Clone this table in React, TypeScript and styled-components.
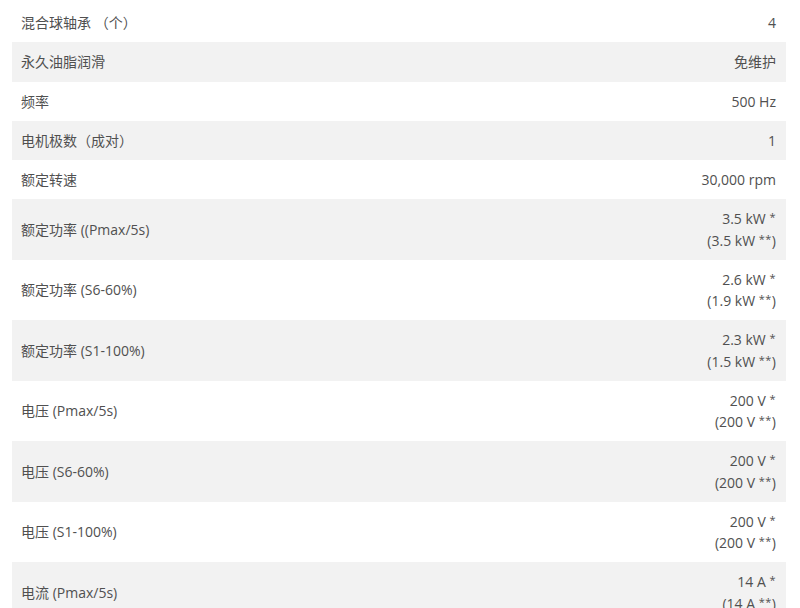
import * as React from "react"
import styled, { createGlobalStyle } from "styled-components"

const GlobalStyle = createGlobalStyle`
    html, body {
        margin: 0;
        padding: 0;
        background: #ffffff;
    }
    body {
        font-family: "Open Sans", "Noto Sans CJK SC", sans-serif;
        font-size: 14px;
        color: #505050;
    }
`

const Wrapper = styled.div`
    padding: 3px 14px 0 12px;
`

const SpecTable = styled.table`
    width: 100%;
    border-collapse: collapse;
    border-spacing: 0;
`

const Row = styled.tr`
    &:nth-child(even) {
        background: #f2f2f2;
    }
`

const Label = styled.td`
    padding: 9px 9px;
    line-height: 21.25px;
    vertical-align: middle;
    text-align: left;
    white-space: nowrap;
`

const Value = styled.td`
    padding: 9px 10px;
    line-height: 21.25px;
    vertical-align: middle;
    text-align: right;
    white-space: nowrap;
`

const Line = styled.div`
    display: block;
`

const Star = styled.span`
    font-size: 11px;
    line-height: 0;
    vertical-align: 3px;
    letter-spacing: 0.5px;
`

type Spec = { label: string; value?: string; power?: [string, string] }

const specs: Spec[] = [
    { label: "混合球轴承 （个）", value: "4" },
    { label: "永久油脂润滑", value: "免维护" },
    { label: "频率", value: "500 Hz" },
    { label: "电机极数（成对）", value: "1" },
    { label: "额定转速", value: "30,000 rpm" },
    { label: "额定功率 ((Pmax/5s)", power: ["3.5 kW", "3.5 kW"] },
    { label: "额定功率 (S6-60%)", power: ["2.6 kW", "1.9 kW"] },
    { label: "额定功率 (S1-100%)", power: ["2.3 kW", "1.5 kW"] },
    { label: "电压 (Pmax/5s)", power: ["200 V", "200 V"] },
    { label: "电压 (S6-60%)", power: ["200 V", "200 V"] },
    { label: "电压 (S1-100%)", power: ["200 V", "200 V"] },
    { label: "电流 (Pmax/5s)", power: ["14 A", "14 A"] },
]

export default function App() {
    return (
        <>
            <GlobalStyle />
            <Wrapper>
                <SpecTable>
                    <tbody>
                        {specs.map((s) => (
                            <Row key={s.label}>
                                <Label>{s.label}</Label>
                                <Value>
                                    {s.power ? (
                                        <>
                                            <Line>
                                                {s.power[0]} <Star>*</Star>
                                            </Line>
                                            <Line>
                                                ({s.power[1]} <Star>**</Star>)
                                            </Line>
                                        </>
                                    ) : (
                                        s.value
                                    )}
                                </Value>
                            </Row>
                        ))}
                    </tbody>
                </SpecTable>
            </Wrapper>
        </>
    )
}
